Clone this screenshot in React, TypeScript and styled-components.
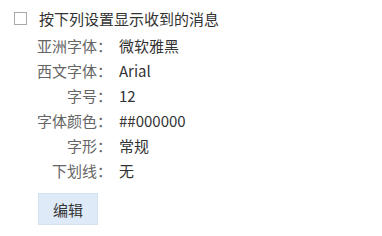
import styled, { createGlobalStyle } from "styled-components";

const GlobalStyle = createGlobalStyle`
  html, body {
    margin: 0;
    padding: 0;
    background: #ffffff;
  }
  body {
    font-family: "Noto Sans CJK SC", "Noto Sans", sans-serif;
  }
`;

const rows = [
  { label: "亚洲字体", value: "微软雅黑" },
  { label: "西文字体", value: "Arial" },
  { label: "字号", value: "12" },
  { label: "字体颜色", value: "##000000" },
  { label: "字形", value: "常规" },
  { label: "下划线", value: "无" },
];

const App = () => {
  return (
    <>
      <GlobalStyle />
      <StyledPanel>
        <div className="head">
          <span className="box" />
          <p>按下列设置显示收到的消息</p>
        </div>
        <div className="list">
          {rows.map((r) => (
            <div className="row" key={r.label}>
              <span className="label">
                {r.label}
                <span className="colon">：</span>
              </span>
              <span className="value">{r.value}</span>
            </div>
          ))}
        </div>
        <EditButton>编辑</EditButton>
      </StyledPanel>
    </>
  );
};

export default App;

const StyledPanel = styled.div`
  width: 382px;
  height: 236px;
  box-sizing: border-box;
  padding: 6px 0 0 14px;
  display: flex;
  flex-direction: column;
  font-size: 15px;

  .head {
    height: 25px;
    display: flex;
    align-items: center;
    gap: 12px;

    p {
      margin: 0;
      color: #333333;
      line-height: 25px;
    }
  }

  .box {
    width: 11px;
    height: 11px;
    border: 1px solid #a9a9a9;
    background: #ffffff;
  }

  .list {
    margin-top: 2px;
    padding-left: 18px;
    display: flex;
    flex-direction: column;
  }

  .row {
    height: 25px;
    display: flex;
    align-items: center;
    line-height: 25px;
  }

  .label {
    width: 80px;
    flex-shrink: 0;
    display: flex;
    justify-content: flex-end;
    white-space: nowrap;
    color: #666666;
  }

  .colon {
    display: inline-block;
    width: 15px;
    text-align: center;
  }

  .value {
    margin-left: 7px;
    white-space: nowrap;
    color: #333333;
  }
`;

const EditButton = styled.button`
  margin: 10px 0 0 24px;
  width: 60px;
  height: 32px;
  padding: 0;
  border: 1px solid #d3e2f1;
  background: #deeaf7;
  color: #333333;
  font-family: "Noto Sans CJK SC", "Noto Sans", sans-serif;
  font-size: 15px;
  cursor: pointer;
`;
